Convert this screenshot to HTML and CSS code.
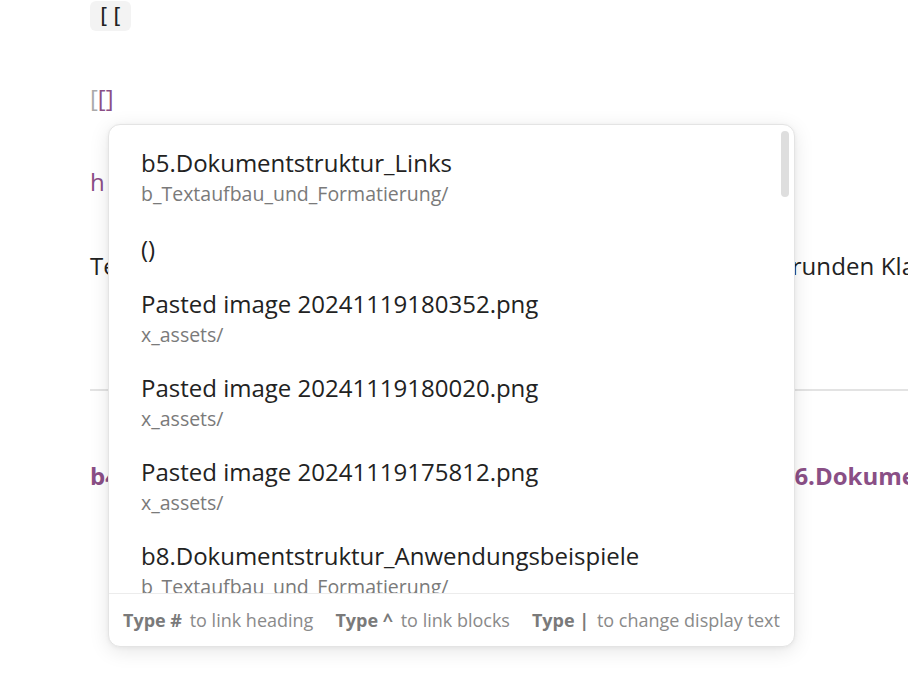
FILE: index.html
```html
<!DOCTYPE html>
<html lang="de">
<head>
<meta charset="utf-8">
<link rel="stylesheet" href="styles.css">
</head>
<body>
<main class="editor">
  <p class="line line-code"><span class="code">[[</span></p>
  <p class="line"><span class="bracket">[</span><span class="link">[]</span></p>
  <p class="line"><span class="link">h</span></p>
  <p class="line line-text">Text in eckigen Klammern wird ein Link. Die Adresse gehört in runden Klammern.</p>
  <hr class="rule">
  <p class="line nav"><span class="link">b4.Dokumentstruktur_Listen_und_Aufzählungszeichen</span> — <span class="link">b6.Dokumentstruktur_Tabellen</span></p>
</main>

<div class="suggest">
  <div class="list">
    <div class="item">
      <div class="title">b5.Dokumentstruktur_Links</div>
      <div class="path">b_Textaufbau_und_Formatierung/</div>
    </div>
    <div class="item item-single">
      <div class="title">()</div>
    </div>
    <div class="item">
      <div class="title">Pasted image 20241119180352.png</div>
      <div class="path">x_assets/</div>
    </div>
    <div class="item">
      <div class="title">Pasted image 20241119180020.png</div>
      <div class="path">x_assets/</div>
    </div>
    <div class="item">
      <div class="title">Pasted image 20241119175812.png</div>
      <div class="path">x_assets/</div>
    </div>
    <div class="item">
      <div class="title">b8.Dokumentstruktur_Anwendungsbeispiele</div>
      <div class="path">b_Textaufbau_und_Formatierung/</div>
    </div>
    <div class="scrollbar"></div>
  </div>
  <div class="footer">
    <span class="hint"><b>Type #</b> to link heading</span>
    <span class="hint"><b>Type ^</b> to link blocks</span>
    <span class="hint"><b>Type |</b> to change display text</span>
  </div>
</div>
</body>
</html>
```
FILE: styles.css
```css
html, body {
  margin: 0;
  padding: 0;
  background: #ffffff;
  overflow: hidden;
  width: 908px;
  height: 679px;
}
body {
  font-family: "Open Sans", "Noto Sans", sans-serif;
  color: #222222;
  position: relative;
}
.editor {
  padding: 0 0 0 90px;
  margin-top: -2px;
}
.line {
  margin: 0;
  font-size: 24px;
  line-height: 32px;
  white-space: nowrap;
  height: 32px;
}
.line + .line { margin-top: 52px; }
.line-text { letter-spacing: 0.1px; }
.code {
  font-family: "DejaVu Sans Mono", monospace;
  font-size: 22px;
  line-height: 30px;
  display: inline-block;
  background: #f3f3f3;
  border-radius: 6px;
  padding: 0 7px;
  color: #222;
}
.bracket { color: #aaaaaa; }
.link { color: #8a4f86; }
.rule {
  border: none;
  height: 2px;
  background: #e3e3e3;
  margin: 107px 0 0 0;
}
.rule + .line { margin-top: 69px; }
.nav { font-weight: 700; color: #8a4f86; }

.suggest {
  position: absolute;
  left: 108px;
  top: 124px;
  width: 685px;
  height: 521px;
  background: #ffffff;
  border: 1px solid #e4e4e4;
  border-radius: 12px;
  box-shadow: 0 4px 20px rgba(0,0,0,0.10), 0 1px 4px rgba(0,0,0,0.05);
  display: flex;
  flex-direction: column;
  overflow: hidden;
}
.list {
  flex: 1;
  overflow: hidden;
  padding: 11px 0 0 0;
  position: relative;
}
.item {
  padding: 11px 32px;
}
.item-single {
  padding: 13px 32px 12px 32px;
}
.title {
  font-size: 24px;
  line-height: 32px;
  color: #222222;
}
.path {
  font-size: 19.5px;
  line-height: 30px;
  color: #7a7a7a;
}
.scrollbar {
  position: absolute;
  right: 5px;
  top: 6px;
  width: 8px;
  height: 66px;
  border-radius: 4px;
  background: #dedede;
}
.footer {
  border-top: 1px solid #ececec;
  height: 52px;
  display: flex;
  align-items: center;
  gap: 22px;
  padding: 0 14px;
  font-size: 18px;
  color: #8a8a8a;
  white-space: nowrap;
}
.footer b {
  color: #7a7a7a;
  font-weight: 700;
  margin-right: 3px;
}
```
